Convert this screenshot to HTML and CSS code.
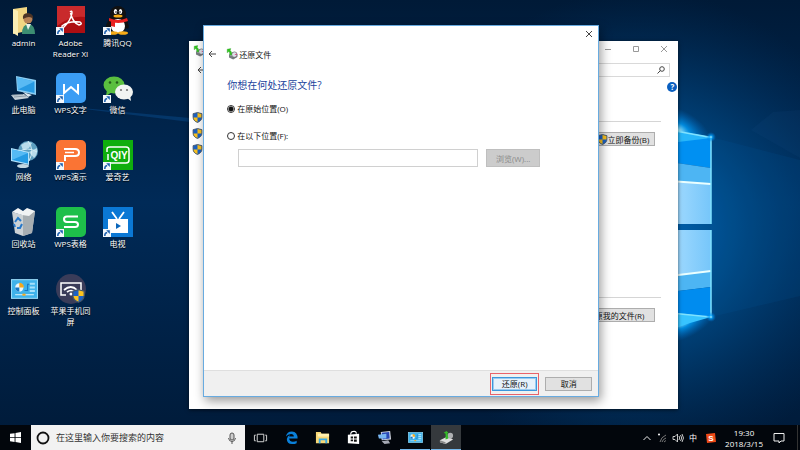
FILE: index.html
```html
<!DOCTYPE html>
<html lang="zh-CN">
<head>
    <meta charset="UTF-8">
    <meta name="viewport" content="width=device-width, initial-scale=1.0">
    <title>还原文件</title>
    <link rel="stylesheet" href="styles.css">
</head>
<body>
    <!-- Shared shapes -->
    <svg class="defs" width="0" height="0">
        <symbol id="shield" viewBox="0 0 20 20">
            <path d="M10 1 L18 3 V9 Q18 16 10 19 Q2 16 2 9 V3 Z" fill="#1c62c4"/>
            <path d="M10 1 L18 3 V10 H10 Z M10 10 V19 Q2 16 2 10 Z" fill="#fcc31e"/>
            <path d="M10 1 L18 3 V9 Q18 16 10 19 Q2 16 2 9 V3 Z" fill="none" stroke="#44566b" stroke-width="1.6"/>
        </symbol>
        <symbol id="shortcut" viewBox="0 0 8 8">
            <rect width="8" height="8" fill="#f4f8fc"/>
            <path d="M1.8 7 Q1.6 3.8 4.2 3.4" fill="none" stroke="#1b5fae" stroke-width="1.5"/>
            <path d="M3.2 1.2 H6.8 V4.9 Z" fill="#1b5fae"/>
        </symbol>
        <symbol id="backup" viewBox="0 0 20 20">
            <path d="M5 11 L12 7 L19 11 V15 L12 19 L5 16 Z" fill="#777c80"/>
            <path d="M5 11 L12 7 L19 11 L12 15 Z" fill="#c9cdd0"/>
            <circle cx="14" cy="11" r="4.5" fill="#dfe1ea" stroke="#555" stroke-width="1"/>
            <path d="M14 11 L18 9 L18 12 Z" fill="#d0407a"/>
            <path d="M2 2 L8 1 L7 4 Q11 7 9 12 L6 11 Q7 8 4.500 6 L2 8 Z" fill="#35c522" stroke="#148a10" stroke-width=".5"/>
        </symbol>
        <symbol id="panel" viewBox="0 0 26 19">
            <rect x=".5" y=".5" width="25" height="18" fill="#3fb2ea" stroke="#9bdcf8"/>
            <circle cx="8" cy="8" r="4" fill="#e8f6fd"/>
            <path d="M8 8 V3.500 A4.500 4.500 0 0 1 12.500 8 Z" fill="#f5a81c"/>
            <path d="M8 8 H4 A4 4 0 0 0 8 12 Z" fill="#1676c4"/>
            <path d="M13 11 H16 V5 H18" fill="none" stroke="#1676c4"/>
            <path d="M18 4.500 H23 M18 8 H23 M18 11.500 H23" stroke="#a5e0fa" stroke-width="2"/>
            <path d="M4 15 H22" stroke="#d5f0fc"/>
            <rect x="11" y="14" width="3" height="2" fill="#f5a81c"/>
        </symbol>
    </svg>

    <main class="desktop">
        <svg class="wallpaper" viewBox="0 0 800 450" preserveAspectRatio="none" aria-hidden="true">
            <defs>
                <linearGradient id="base" x1="0" y1="0" x2="0" y2="1">
                    <stop offset="0" stop-color="#001a37"/>
                    <stop offset=".45" stop-color="#002a57"/>
                    <stop offset="1" stop-color="#001a38"/>
                </linearGradient>
                <radialGradient id="glow" gradientUnits="userSpaceOnUse" cx="640" cy="230" r="240">
                    <stop offset="0" stop-color="#006ec4"/>
                    <stop offset=".4" stop-color="#00508f" stop-opacity=".8"/>
                    <stop offset="1" stop-color="#003566" stop-opacity="0"/>
                </radialGradient>
                <radialGradient id="flare">
                    <stop offset="0" stop-color="#a8efff"/>
                    <stop offset=".35" stop-color="#00a2ff" stop-opacity=".75"/>
                    <stop offset="1" stop-color="#0070d0" stop-opacity="0"/>
                </radialGradient>
                <linearGradient id="pane">
                    <stop offset="0" stop-color="#a5dcff"/>
                    <stop offset="1" stop-color="#76c6fa"/>
                </linearGradient>
            </defs>
            <rect width="800" height="450" fill="url(#base)"/>
            <rect width="800" height="450" fill="url(#glow)"/>
            <path d="M60 106 L190 118 V122 Z" fill="#0a5298" opacity=".4"/>
            <path d="M711 137 L800 160 V296 L711 317 Z" fill="#0062ac" opacity=".12"/>
            <path d="M751 130 L773 112 L800 110 V158 Z" fill="#1d5c94" opacity=".1"/>
            <ellipse cx="678" cy="130" rx="36" ry="20" transform="rotate(28 678 130)" fill="url(#flare)"/>
            <ellipse cx="682" cy="322" rx="36" ry="17" transform="rotate(-25 682 322)" fill="url(#flare)"/>
            <path d="M670 130 L711 137 V168 L670 162 Z" fill="#0090f2"/>
            <path d="M670 130 L711 137 V138 L670 143 Z" fill="#27b6fa"/>
            <path d="M670 162 L711 168 V184 L670 181 Z" fill="#4db5f3"/>
            <path d="M670 181 L711 184 V224 H670 Z" fill="url(#pane)"/>
            <path d="M670 181 L711 184" stroke="#eaffff" stroke-width="2"/>
            <path d="M670 230 H711 V271 L670 276 Z" fill="url(#pane)"/>
            <path d="M670 276 L711 271 V287 L670 292 Z" fill="#4db5f3"/>
            <path d="M670 292 L711 287 V317 L670 312 Z" fill="#008cef"/>
            <path d="M670 276 L711 271" stroke="#eaffff" stroke-width="2"/>
            <path d="M670 312 L711 317 L690 323 L670 330 Z" fill="#38c4ff"/>
            <path d="M670 130 L711 137.500 V224 M711 230 V317 L670 313" fill="none" stroke="#7fe2ff" stroke-width="1.500"/>
            <circle cx="711" cy="137" r="5" fill="url(#flare)"/>
            <circle cx="711" cy="317" r="5" fill="url(#flare)"/>
        </svg>

        <div class="icons">
            <button class="shortcut">
                <svg viewBox="0 0 30 30"><path d="M4 3 L18 1 V25 L4 28 Z" fill="#f2d683"/><path d="M4 3 L9 5 V30 L4 27 Z" fill="#fbeeb4"/><path d="M13 28 Q13 18 20 18 Q26 19 26 28 Z" fill="#3d8e72"/><path d="M17 18 L19 24 L22 18 Z" fill="#e8f1ea"/><circle cx="19" cy="13" r="4.500" fill="#b98357"/><path d="M14 13 Q13 7 19 7 Q25 8 24 13 Q21 9 14 13" fill="#4c3426"/></svg>
                <span>admin</span>
            </button>
            <button class="shortcut">
                <svg viewBox="0 0 30 30"><path d="M7 3 L27 7 V22 L8 18 Z" fill="#8ccdf2"/><path d="M8.500 4.500 L25.500 8.500 V20 L9 16.500 Z" fill="#2699e2"/><path d="M8.500 4.500 L25.500 8.500 L9 16.500 Z" fill="#59baf3"/><path d="M2 22 L15 21 L20 25 L6 27 Z" fill="#c5d0d8"/><path d="M3 22 L14 21.500 M5 24 L17 23" stroke="#718391" stroke-width=".7"/><path d="M14 19 L23 22 L19 24 Z" fill="#dce7ee"/></svg>
                <span>此电脑</span>
            </button>
            <button class="shortcut">
                <svg viewBox="0 0 30 30"><circle cx="19" cy="11" r="10" fill="#5d9fc0"/><path d="M12 5 Q18 0 23 3 L20 8 L14 10 Z M20 12 L28 8 Q29 14 25 18 Z" fill="#b9dceb"/><path d="M9 12 Q19 6 28 12 M19 1 Q26 10 20 21" fill="none" stroke="#d4edf5"/><path d="M2 8 L20 12 V25 L2 21 Z" fill="#b0e0fa"/><path d="M3 9.500 L19 13 V23.500 L3 20 Z" fill="#249be4"/><path d="M3 9.500 L19 13 L3 20 Z" fill="#55baf4"/><ellipse cx="14" cy="26" rx="6" ry="2" fill="#c3d7e2"/></svg>
                <span>网络</span>
            </button>
            <button class="shortcut">
                <svg viewBox="0 0 30 30"><path d="M3 5 L14 8 L26 4 L23 26 L14 29 L6 26 Z" fill="#ccd2d5"/><path d="M14 8 L26 4 L23 26 L14 29 Z" fill="#a7aeb2"/><path d="M3 5 L9 1 L14 4 L18 1 L26 4 L20 9 L13 8 Z" fill="#f1f3f4"/><path d="M6 15 L9 11 L12 14 M13 17 L11 21 H8 M6 20 L5 17" fill="none" stroke="#2677c9" stroke-width="2"/></svg>
                <span>回收站</span>
            </button>
            <button class="shortcut">
                <svg viewBox="0 0 30 30"><use href="#panel" x="2" y="5" width="27" height="20"/></svg>
                <span>控制面板</span>
            </button>
            <button class="shortcut">
                <svg viewBox="0 0 30 30"><rect x="1" width="28" height="27" fill="#ad0e12"/><path d="M1 0 H29 V11 Q15 9 1 20 Z" fill="#c92a2c"/><path d="M14 6 Q16 4 16 7 Q15 14 8 21 Q6 23 6 20 Q12 15 24 16 Q27 18 23 19 Q17 17 14.500 7" fill="none" stroke="#fff" stroke-width="1.500"/><use href="#shortcut" y="21" width="8" height="8"/></svg>
                <span>Adobe Reader XI</span>
            </button>
            <button class="shortcut">
                <svg viewBox="0 0 30 30"><rect width="30" height="30" rx="5" fill="#3b9df4"/><path d="M8 11 V20 L15 14 L22 20 V11" fill="none" stroke="#fff" stroke-width="2"/><use href="#shortcut" y="22" width="8" height="8"/></svg>
                <span>WPS文字</span>
            </button>
            <button class="shortcut">
                <svg viewBox="0 0 30 30"><rect width="30" height="30" rx="5" fill="#fa7434"/><path d="M8 9 H19 Q23 9 23 12.500 Q23 16 19 16 H9 V21" fill="none" stroke="#fff" stroke-width="2"/><path d="M9 12.500 H18" stroke="#fff" stroke-width="1.500"/><use href="#shortcut" y="22" width="8" height="8"/></svg>
                <span>WPS演示</span>
            </button>
            <button class="shortcut">
                <svg viewBox="0 0 30 30"><rect width="30" height="30" rx="5" fill="#1ebf4a"/><path d="M22 9.500 H11 Q8 9.500 8 12 Q8 15 11 15 H19 Q22 15 22 17.500 Q22 20 19 20 H8" fill="none" stroke="#fff" stroke-width="2"/><use href="#shortcut" y="22" width="8" height="8"/></svg>
                <span>WPS表格</span>
            </button>
            <button class="shortcut">
                <svg viewBox="0 0 30 30"><circle cx="15" cy="15" r="15" fill="#3a3c59"/><path d="M10 21 H5 V9 H25 V16" fill="none" stroke="#fff" stroke-width="1.500"/><path d="M8 16 Q15 10 21 16 M11 18 Q15 15 19 18" fill="none" stroke="#fff" stroke-width="1.700"/><circle cx="15" cy="20" r="1.500" fill="#fff"/><use href="#shield" x="15" y="15" width="15" height="14"/></svg>
                <span>苹果手机同屏</span>
            </button>
            <button class="shortcut">
                <svg viewBox="0 0 30 30"><path d="M6 14 Q1 20 4 23 L8 20 M22 14 Q28 20 25 23 L21 20" fill="#111"/><ellipse cx="15" cy="17" rx="10" ry="10" fill="#111"/><ellipse cx="15" cy="8" rx="8" ry="8" fill="#111"/><ellipse cx="15" cy="20" rx="7" ry="7" fill="#fff"/><ellipse cx="12.500" cy="5.500" rx="1.700" ry="2.500" fill="#fff"/><ellipse cx="17.500" cy="5.500" rx="1.700" ry="2.500" fill="#fff"/><circle cx="13" cy="6" r=".8"/><circle cx="17" cy="6" r=".8"/><ellipse cx="15" cy="10" rx="4.500" ry="1.500" fill="#f6ab16"/><path d="M6 12 Q15 16 24 12 L25 15 Q15 19 6 15 Z M8 15 L12 16 V21 L8 20 Z" fill="#e9211f"/><ellipse cx="10" cy="27" rx="5" ry="1.800" fill="#f6ab16"/><ellipse cx="20" cy="27" rx="5" ry="1.800" fill="#f6ab16"/><use href="#shortcut" y="21" width="8" height="8"/></svg>
                <span>腾讯QQ</span>
            </button>
            <button class="shortcut">
                <svg viewBox="0 0 30 30"><ellipse cx="11" cy="12" rx="10.500" ry="8.500" fill="#5abf3f"/><path d="M4 17 L3 23 L9 19 Z" fill="#5abf3f"/><circle cx="7" cy="9.500" r="1.300" fill="#245c1a"/><circle cx="14" cy="9.500" r="1.300" fill="#245c1a"/><ellipse cx="21" cy="19" rx="9" ry="7.500" fill="#f1f4f2"/><path d="M24 25 L28 28 L27 22 Z" fill="#f1f4f2"/><circle cx="18" cy="17" r="1.100" fill="#777"/><circle cx="24" cy="17" r="1.100" fill="#777"/><use href="#shortcut" y="22" width="8" height="8"/></svg>
                <span>微信</span>
            </button>
            <button class="shortcut">
                <svg viewBox="0 0 30 30"><rect width="30" height="30" fill="#0fae0d"/><path d="M4 12 V9 Q4 7 7 7 H23 Q26 7 26 10 V20 Q26 23 23 23 H8" fill="none" stroke="#fff" stroke-width="1.500"/><path d="M5 14 V20" stroke="#fff" stroke-width="1.500"/><text x="16" y="19" class="logo-text" fill="#fff">QIY</text><use href="#shortcut" y="22" width="8" height="8"/></svg>
                <span>爱奇艺</span>
            </button>
            <button class="shortcut">
                <svg viewBox="0 0 30 30"><rect width="30" height="30" fill="#0b78d4"/><path d="M9 5 L14 12 M21 5 L16 12" stroke="#fff" stroke-width="1.800"/><rect x="5" y="12" width="20" height="14" fill="#fff"/><path d="M13 16 L18 19 L13 22 Z" fill="#0b66bb"/><use href="#shortcut" y="22" width="8" height="8"/></svg>
                <span>电视</span>
            </button>
        </div>

        <!-- Backup window, behind -->
        <section class="window backup-window">
            <header class="backup-bar">
                <svg class="icon12" viewBox="0 0 20 20"><use href="#backup"/></svg>
                <div class="window-controls">
                    <button aria-label="最小化"><svg class="icon8" viewBox="0 0 8 8"><path d="M1 4.500 H7"/></svg></button>
                    <button aria-label="最大化"><svg class="icon8" viewBox="0 0 8 8"><path d="M1.500 1.500 H6.500 V6.500 H1.500 Z"/></svg></button>
                    <button aria-label="关闭"><svg class="icon8" viewBox="0 0 8 8"><path d="M1 1 L7 7 M7 1 L1 7"/></svg></button>
                </div>
            </header>
            <div class="backup-nav">
                <button class="back" aria-label="后退"><svg class="icon8" viewBox="0 0 8 8"><path d="M8 4 H1 M4 1 L1 4 L4 7"/></svg></button>
                <div class="nav-search">
                    <input type="text" aria-label="搜索控制面板">
                    <svg class="icon8" viewBox="0 0 8 8"><circle cx="5" cy="3" r="2.300"/><path d="M3.500 4.500 L.5 7.500"/></svg>
                </div>
            </div>
            <div class="backup-body">
                <div class="side">
                    <svg viewBox="0 0 20 20"><use href="#shield"/></svg>
                    <svg viewBox="0 0 20 20"><use href="#shield"/></svg>
                    <svg viewBox="0 0 20 20"><use href="#shield"/></svg>
                </div>
                <div class="backup-main">
                    <div class="section">
                        <button class="btn"><svg viewBox="0 0 20 20"><use href="#shield"/></svg>立即备份(B)</button>
                    </div>
                    <div class="section">
                        <button class="btn">还原我的文件(R)</button>
                    </div>
                </div>
                <button class="help" aria-label="帮助">?</button>
            </div>
        </section>

        <!-- Restore dialog -->
        <section class="window dialog">
            <div class="dialog-top">
                <button aria-label="关闭"><svg class="icon8" viewBox="0 0 8 8"><path d="M1 1 L7 7 M7 1 L1 7"/></svg></button>
            </div>
            <header class="dialog-title">
                <button class="back" aria-label="后退"><svg class="icon8" viewBox="0 0 8 8"><path d="M8 4 H1 M4 1 L1 4 L4 7"/></svg></button>
                <svg class="icon12" viewBox="0 0 20 20"><use href="#backup"/></svg>
                <span>还原文件</span>
            </header>
            <form class="dialog-body">
                <h1>你想在何处还原文件?</h1>
                <div class="choices">
                    <label class="choice"><input type="radio" name="place" checked>在原始位置(O)</label>
                    <label class="choice"><input type="radio" name="place">在以下位置(F):</label>
                </div>
                <div class="path">
                    <input type="text" aria-label="还原位置">
                    <button class="btn" type="button" disabled>浏览(W)...</button>
                </div>
            </form>
            <footer class="dialog-footer">
                <div class="marked"><button class="btn primary">还原(R)</button></div>
                <button class="btn">取消</button>
            </footer>
        </section>
    </main>

    <nav class="taskbar">
        <button class="start" aria-label="开始"><svg viewBox="0 0 12 12"><path d="M0 2 L5 1.300 V5.600 H0 Z M6 1.200 L12 0 V5.600 H6 Z M0 6.500 H5 V10.800 L0 10 Z M6 6.500 H12 V12 L6 11 Z" fill="#fff"/></svg></button>
        <div class="search">
            <svg class="icon14" viewBox="0 0 14 14"><circle cx="7" cy="7" r="5.500" fill="none" stroke="#111" stroke-width="1.800"/></svg>
            <input type="text" placeholder="在这里输入你要搜索的内容" aria-label="搜索">
            <svg class="icon12" viewBox="0 0 12 12"><rect x="4" y="1" width="4" height="7" rx="2" fill="#ccc" stroke="#555"/><path d="M2.500 6 Q3 9.500 6 9.500 Q9 9.500 9.500 6 M6 9.500 V12" fill="none" stroke="#555"/></svg>
        </div>
        <div class="tasks">
            <button aria-label="任务视图"><svg viewBox="0 0 16 16"><path d="M4.500 4.500 H11.500 V12.500 H4.500 Z M3 5.500 H1.500 V11.500 H3 M13 5.500 H14.500 V11.500 H13" fill="none" stroke="#ddd"/></svg></button>
            <button aria-label="Edge"><svg viewBox="0 0 16 16"><path d="M2 7 Q3 1.500 8.500 1.500 Q14.500 2 14.500 9 H5.500 Q6 12.500 9.500 12.500 Q12 12.500 13.500 11.500 V14 Q11 15.200 8.500 15 Q3 14.500 3 9.500 Q3.500 6.500 6.500 5 Q5.500 6 5.500 7 H10.500 Q10.500 4.300 7.500 4.300 Q4 4.500 2 7 Z" fill="#0a80da"/></svg></button>
            <button aria-label="文件资源管理器"><svg viewBox="0 0 16 16"><path d="M1 2 H6 L7 4 H15 V14 H1 Z" fill="#f8d775"/><path d="M3 4 H15 V7 H3 Z" fill="#fff0b0"/><path d="M4 14 V9 H13 V14 H11 V11 H6 V14 Z" fill="#38a9e4"/></svg></button>
            <button aria-label="应用商店"><svg viewBox="0 0 16 16"><path d="M2 5 L14 4 V15 L2 14 Z" fill="#fff"/><path d="M5 5 Q5 1.500 8 1.500 Q11 1 11 4" fill="none" stroke="#fff" stroke-width="1.200"/><path d="M5 7 H7.500 V9 H5 Z M8.500 7 H11.500 V9 H8.500 Z M5 10 H7.500 V12 H5 Z M8.500 10 H11.500 V12.500 H8.500 Z" fill="#111"/></svg></button>
            <button aria-label="远程连接"><svg viewBox="0 0 16 16"><path d="M4 2 L14 1 L15 10 L5 11 Z" fill="#d4d9e4"/><path d="M5 3 L13 2 L13.500 9 L6 10 Z" fill="#2847b6"/><path d="M1 5 L10 4 V9 L2 9 Z" fill="#78b6f2"/><path d="M5 12 L12 11 L14 14 L8 15 Z" fill="#a5a9b5"/></svg></button>
            <button class="open" aria-label="控制面板"><svg viewBox="0 0 26 19"><use href="#panel"/></svg></button>
            <button class="open active" aria-label="备份和还原"><svg viewBox="0 0 16 16"><path d="M1 11 L9 7 L15 10 L7 15 L1 13 Z" fill="#dedede"/><path d="M1 11 L7 13 V15 L1 13 Z" fill="#888"/><circle cx="12" cy="6" r="3" fill="#aeb0b2"/><path d="M5 3 L8 1 L10 3 L9 3.500 L10 9 L7 10 L7 4 Z" fill="#33ba28"/></svg></button>
        </div>
        <div class="tray">
            <svg class="icon10" viewBox="0 0 10 10"><path d="M1.500 7 L5 3.500 L8.500 7" fill="none" stroke="#eee"/></svg>
            <svg class="icon10" viewBox="0 0 10 10"><path d="M3 9 Q4 4 9 2 M5 9 Q6 6 9 5 M7 9 L9 7.500" fill="none" stroke="#777"/><circle cx="2" cy="1.500" r="1" fill="#fff"/></svg>
            <svg class="icon12" viewBox="0 0 12 12"><path d="M1 4.500 H3 L5.500 2 V10 L3 7.500 H1 Z M7 4 Q8.500 6 7 8 M8.500 3 Q11 6 8.500 9 M10 2 Q13 6 10 10" fill="none" stroke="#ddd" stroke-width=".9"/></svg>
            <span class="ime">中</span>
            <svg class="icon10 sogou" viewBox="0 0 10 10"><path d="M0 1 L9 0 L10 9 L1 10 Z" fill="#f04a17"/><text x="5" y="8" class="logo-text" fill="#fff">S</text></svg>
            <time class="clock"><span>19:30</span><span>2018/3/15</span></time>
            <svg class="icon12" viewBox="0 0 12 12"><path d="M1 1.500 H11 V9 H8 L6 11 V9 H1 Z" fill="none" stroke="#eee"/></svg>
        </div>
    </nav>
</body>
</html>
```
FILE: styles.css
```css
* {
    box-sizing: border-box;
}

body {
    margin: 0;
    height: 100vh;
    display: flex;
    flex-direction: column;
    overflow: hidden;
    background-color: #001a38;
    color: #111;
    font-family: "Open Sans", "Noto Sans CJK SC", sans-serif;
    font-size: 8px;
    line-height: 11px;
}

button,
input {
    font: inherit;
    color: inherit;
    margin: 0;
    padding: 0;
    border: none;
    background: none;
    min-width: 0;
}

svg {
    display: block;
    flex: none;
}

.defs {
    position: absolute;
}

.icon8 {
    width: 8px;
    height: 8px;
    fill: none;
    stroke: #444;
}

.icon10 {
    width: 10px;
    height: 10px;
}

.icon12 {
    width: 12px;
    height: 12px;
}

.icon14 {
    width: 14px;
    height: 14px;
}

.logo-text {
    font-family: "Liberation Sans", sans-serif;
    font-size: 10px;
    font-weight: bold;
    text-anchor: middle;
    text-shadow: none;
}

/* Desktop */
.desktop {
    position: relative;
    flex: 1;
    min-height: 0;
}

.wallpaper {
    position: absolute;
    top: 0;
    left: 0;
    width: 100%;
    height: 100vh;
}

.icons {
    position: relative;
    display: grid;
    grid-auto-flow: column;
    grid-template-rows: repeat(5, 67px);
    grid-auto-columns: 47px;
    padding-top: 6px;
}

.shortcut {
    display: flex;
    flex-direction: column;
    align-items: center;
    gap: 1px;
    color: #fff;
    text-shadow: 0 1px 1px #000;
}

.shortcut svg {
    width: 30px;
    height: 30px;
}

.shortcut span {
    max-width: 40px;
}

.window {
    position: absolute;
    display: flex;
    flex-direction: column;
    background-color: #fff;
}

.btn {
    display: flex;
    align-items: center;
    justify-content: center;
    height: 14px;
    border: 1px solid #adadad;
    background-color: #e1e1e1;
}

/* Backup window */
.backup-window {
    top: 41px;
    bottom: 16px;
    left: 23.6%;
    width: 61.2%;
    box-shadow: 0 1px 4px rgba(0, 0, 0, 0.6);
}

.backup-bar {
    flex: none;
    display: flex;
    justify-content: space-between;
    height: 20px;
    padding: 4px 10px 0 4px;
}

.window-controls {
    display: flex;
    align-items: flex-start;
    gap: 20px;
}

.window-controls svg {
    stroke: #999;
}

.backup-nav {
    flex: none;
    display: flex;
    justify-content: space-between;
    align-items: center;
    height: 18px;
    padding: 0 8px;
}

.nav-search {
    display: flex;
    align-items: center;
    width: 130px;
    height: 14px;
    padding-right: 4px;
    border: 1px solid #d9d9d9;
}

.nav-search input {
    flex: 1;
    height: 12px;
}

.backup-body {
    flex: 1;
    min-height: 0;
    display: flex;
    align-items: flex-start;
    padding-top: 2px;
}

.side {
    display: flex;
    flex-direction: column;
    gap: 5px;
    width: 120px;
    padding: 31px 3px;
}

.side svg,
.btn svg {
    width: 11px;
    height: 11px;
}

.backup-main {
    flex: 1;
    padding-top: 40px;
}

.section {
    display: flex;
    justify-content: flex-end;
    align-items: flex-start;
    padding: 10px 6px 0 0;
    border-top: 1px solid #d5d5d5;
}

.section:first-child {
    height: 176px;
}

.section .btn {
    padding: 0 5px 0 0;
}

.section:last-child .btn {
    padding: 0 10px;
}

.help {
    width: 10px;
    height: 10px;
    margin: 1px 1px 0 6px;
    border-radius: 50%;
    background-color: #0a5fc0;
    color: #fff;
    font-weight: bold;
    line-height: 10px;
}

/* Restore dialog */
.dialog {
    top: 25px;
    bottom: 28px;
    left: 25.4%;
    width: 49.5%;
    border: 1px solid #68abe0;
    box-shadow: 2px 4px 10px rgba(0, 0, 0, 0.4);
}

.dialog-top {
    display: flex;
    justify-content: flex-end;
    align-items: flex-start;
    height: 20px;
    padding: 4px 5px 0;
}

.dialog-title {
    display: flex;
    align-items: center;
    height: 16px;
    padding: 0 4px;
}

.dialog-title .icon12 {
    margin: 0 1px 0 10px;
}

.dialog-body {
    flex: 1;
    display: flex;
    flex-direction: column;
    padding: 15px 23px;
}

h1 {
    margin: 0 0 10px;
    color: #1a439c;
    font-size: 10px;
    font-weight: normal;
    line-height: 16px;
}

.choices {
    display: flex;
    flex-direction: column;
    gap: 16px;
}

.choice {
    display: flex;
    align-items: center;
    gap: 2px;
    height: 11px;
}

.choice input {
    appearance: none;
    width: 8px;
    height: 8px;
    border: 1px solid #333;
    border-radius: 50%;
}

.choice input:checked {
    background: radial-gradient(circle, #111 2px, #fff 3px);
}

.path {
    display: flex;
    gap: 8px;
    margin: 8px 35px 0 11px;
}

.path input {
    flex: 1;
    height: 18px;
    border: 1px solid #d0d0d0;
}

.path .btn {
    width: 54px;
    height: 18px;
    border-color: #bfbfbf;
    background-color: #ccc;
    color: #8a8a8a;
}

.dialog-footer {
    display: flex;
    align-items: center;
    justify-content: flex-end;
    gap: 6px;
    height: 26px;
    padding-right: 6px;
    border-top: 1px solid #dfdfdf;
    background-color: #f0f0f0;
}

.dialog-footer .btn {
    width: 47px;
}

.marked {
    padding: 3px 1px;
    border: 1px solid #e8626a;
}

.dialog-footer .primary {
    width: 45px;
    border-color: #3c96dc;
    box-shadow: inset 0 0 0 1px #9acbf0;
    background-color: #e5f1fb;
}

/* Taskbar */
.taskbar {
    position: relative;
    display: flex;
    height: 25px;
    background-color: #02060c;
    color: #fff;
}

.start {
    width: 31px;
    display: flex;
    align-items: center;
    justify-content: center;
}

.start svg {
    width: 11px;
    height: 11px;
}

.search {
    display: flex;
    align-items: center;
    gap: 6px;
    width: 214px;
    padding: 0 7px 0 5px;
    background-color: #f2f2f2;
    color: #333;
    font-size: 9px;
}

.search input {
    flex: 1;
}

.search input::placeholder {
    color: #333;
}

.tasks {
    flex: 1;
    display: flex;
    gap: 1px;
}

.tasks button {
    display: flex;
    align-items: center;
    justify-content: center;
    width: 30px;
    border-bottom: 1px solid transparent;
}

.tasks svg {
    width: 15px;
    height: 15px;
}

.tasks .open {
    border-color: #76b9ed;
}

.tasks .active {
    background-color: #35393d;
}

.tray {
    display: flex;
    align-items: center;
    gap: 5px;
    padding-right: 12px;
    border-right: 1px solid #333;
    margin-right: 2px;
}

.sogou {
    margin: 0 4px;
}

.sogou .logo-text {
    font-size: 8px;
}

.clock {
    display: flex;
    flex-direction: column;
    align-items: center;
    margin: 0 5px 0 0;
}
```
